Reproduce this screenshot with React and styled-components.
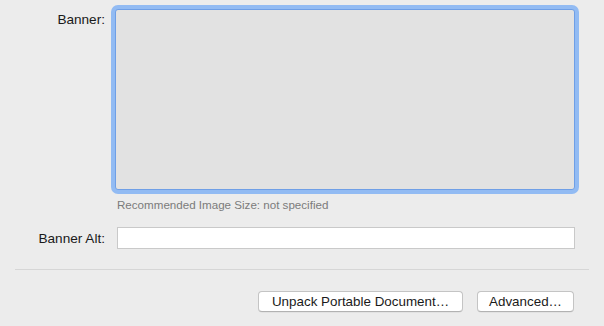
import React from 'react';
import styled, { createGlobalStyle } from 'styled-components';

const GlobalStyle = createGlobalStyle`
  html, body {
    margin: 0;
    padding: 0;
    background: #ececec;
  }
  body {
    font-family: "Liberation Sans", Arial, sans-serif;
    color: #1a1a1a;
  }
`;

const Pane = styled.div`
  width: 604px;
  height: 326px;
  box-sizing: border-box;
  padding-top: 9px;
  background: #ececec;
  overflow: hidden;
`;

const Form = styled.div`
  display: grid;
  grid-template-columns: 105px 460px;
  column-gap: 10px;
  align-items: start;
`;

const Label = styled.div`
  font-size: 13.6px;
  line-height: 15px;
  text-align: right;
  padding-top: ${p => p.$top || 0}px;
  align-self: ${p => p.$center ? 'center' : 'start'};
`;

const Field = styled.div`
  display: flex;
  flex-direction: column;
`;

const ImageWell = styled.div`
  height: 181px;
  box-sizing: border-box;
  background: #e2e2e2;
  border: 1px solid #6f9fe6;
  border-radius: 3px;
  box-shadow: 0 0 0 4px #92bbf3;
`;

const Hint = styled.div`
  margin: 8px 0 16px 2px;
  font-size: 11.6px;
  line-height: 13px;
  color: #7b7b7b;
`;

const TextInput = styled.input`
  margin-left: 2px;
  width: 458px;
  height: 22px;
  box-sizing: border-box;
  border: 1px solid #c9c9c9;
  background: #fff;
  padding: 0 4px;
  font: 13px "Liberation Sans", Arial, sans-serif;
  outline: none;
`;

const Divider = styled.hr`
  margin: 20px 15px 0;
  border: 0;
  border-top: 1px solid #d6d6d6;
  height: 0;
`;

const Actions = styled.div`
  display: flex;
  justify-content: flex-end;
  gap: 14px;
  padding: 21px 30px 0 0;
`;

const Button = styled.button`
  width: ${p => p.$w}px;
  height: 21px;
  box-sizing: border-box;
  padding: 0;
  border: 1px solid #c4c4c4;
  border-bottom-color: #b2b2b2;
  border-radius: 4px;
  background: #fff;
  box-shadow: 0 0.5px 0.5px rgba(0, 0, 0, 0.08);
  font: 13.4px "Liberation Sans", Arial, sans-serif;
  color: #1a1a1a;
  line-height: 19px;
`;

export default function App() {
  return (
    <Pane>
      <GlobalStyle />
      <Form>
        <Label $top={3}>Banner:</Label>
        <Field>
          <ImageWell />
          <Hint>Recommended Image Size: not specified</Hint>
        </Field>
        <Label $center>Banner Alt:</Label>
        <Field>
          <TextInput type="text" defaultValue="" />
        </Field>
      </Form>
      <Divider />
      <Actions>
        <Button $w={205}>Unpack Portable Document…</Button>
        <Button $w={97}>Advanced…</Button>
      </Actions>
    </Pane>
  );
}
